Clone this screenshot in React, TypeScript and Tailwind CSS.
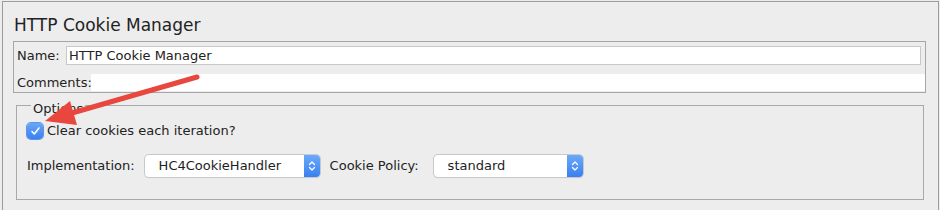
const FONT = "font-['DejaVu_Sans',sans-serif]";

function Stepper() {
  return (
    <div className="flex h-full w-[16px] items-center justify-center rounded-r-[4px] bg-gradient-to-b from-[#6aaaf9] to-[#3a7ff0]">
      <svg width="8" height="12" viewBox="0 0 8 12" fill="none" stroke="white" strokeWidth="1.3" strokeLinecap="round" strokeLinejoin="round">
        <path d="M1.5 4.5 L4 2 L6.5 4.5" />
        <path d="M1.5 7.5 L4 10 L6.5 7.5" />
      </svg>
    </div>
  );
}

function Select({ value, width }: { value: string; width: string }) {
  return (
    <div className={`flex h-[22px] items-stretch rounded-[4px] bg-white shadow-[0_0_0_1px_#c9c9c9,0_1px_1px_rgba(0,0,0,0.15)] ${width}`}>
      <div className="flex flex-1 items-center pl-[14px] text-[13px] text-[#1e1e1e]">{value}</div>
      <Stepper />
    </div>
  );
}

export default function App() {
  return (
    <div className={`relative h-[210px] w-[940px] overflow-hidden bg-[#ececec] pl-[2px] pr-px pt-px ${FONT}`}>
      <div className="h-[230px] border-l border-r border-t border-[#9c9c9c] bg-[#ededed]">
        <h1 className="mt-[13px] pl-[11px] text-[17px] leading-[20px] text-[#222]">HTTP Cookie Manager</h1>

        <div className="ml-[10px] mt-[6px] h-[52px] w-[913px] border border-[#a6a6a6] text-[13px] text-[#222]">
          <div className="mt-[4px] flex h-[19px] items-center pl-[3px] pr-[4px]">
            <span className="w-[49px] leading-[19px]">Name:</span>
            <div className="flex h-[19px] flex-1 items-center border border-[#c8c8c8] bg-white pl-[2px] leading-[17px]">
              HTTP Cookie Manager
            </div>
          </div>
          <div className="mt-[9px] flex h-[17px] items-center pl-[3px]">
            <span className="w-[74px] leading-[17px]">Comments:</span>
            <div className="h-[17px] flex-1 bg-white" />
          </div>
        </div>

        <fieldset className="ml-[13px] mt-[2px] h-[105px] w-[908px] border border-[#a9a9a9] pl-[10px] text-[13px] text-[#222]">
          <legend className="ml-[4px] px-[2px] pt-[6px] leading-[15px]">Options</legend>
          <div className="mt-[6px] flex items-center gap-[4px]">
            <div className="flex h-[16px] w-[16px] items-center justify-center rounded-[4px] bg-gradient-to-b from-[#69a7f7] to-[#3b7ff0] shadow-[0_0_0_1px_#5b93e8]">
              <svg width="11" height="10" viewBox="0 0 11 10" fill="none" stroke="white" strokeWidth="1.6" strokeLinecap="round" strokeLinejoin="round">
                <path d="M2 5.5 L4.3 8 L9 2" />
              </svg>
            </div>
            <span className="leading-[17px]">Clear cookies each iteration?</span>
          </div>
          <div className="mt-[16px] flex items-center">
            <span className="mr-[10px] leading-[22px]">Implementation:</span>
            <Select value="HC4CookieHandler" width="w-[175px]" />
            <span className="ml-[10px] w-[104px] leading-[22px]">Cookie Policy:</span>
            <Select value="standard" width="w-[149px]" />
          </div>
        </fieldset>
      </div>

      <svg className="pointer-events-none absolute left-0 top-0" width="940" height="210" viewBox="0 0 940 210">
        <line x1="197" y1="77" x2="72" y2="113" stroke="#e9473d" strokeWidth="5" strokeLinecap="round" />
        <polygon points="45,121 70,101 77,125" fill="#e9473d" />
      </svg>
    </div>
  );
}
